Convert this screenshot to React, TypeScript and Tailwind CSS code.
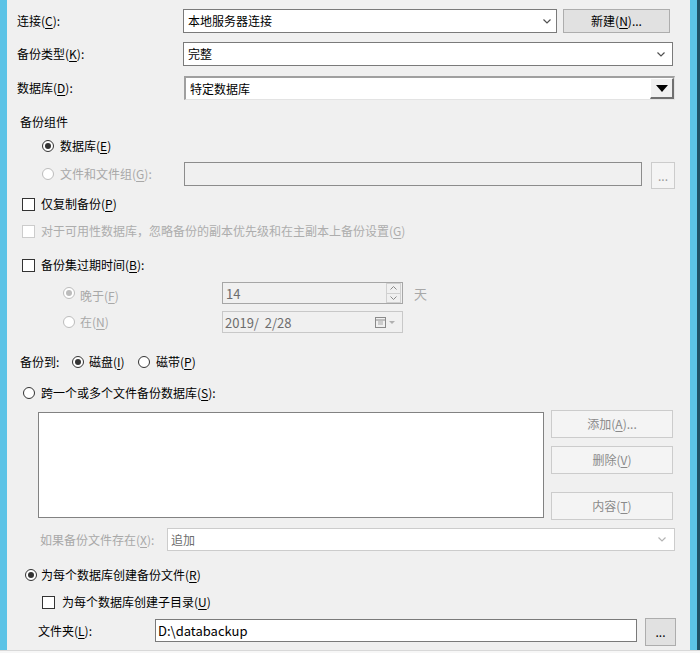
import React from "react";

function Chevron({ light = false }: { light?: boolean }) {
  return (
    <svg width="8" height="5" viewBox="0 0 8 5" className="shrink-0">
      <polyline
        points="0.5,0.5 4,4 7.5,0.5"
        fill="none"
        stroke={light ? "#b4b4b4" : "#505050"}
        strokeWidth="1.2"
      />
    </svg>
  );
}

function Radio({ checked = false, disabled = false }: { checked?: boolean; disabled?: boolean }) {
  return (
    <span
      className={`flex h-[12px] w-[12px] shrink-0 items-center justify-center rounded-full border bg-white ${
        disabled ? "border-[#bcbcbc]" : "border-[#333333]"
      }`}
    >
      {checked && (
        <span className={`h-[6px] w-[6px] rounded-full ${disabled ? "bg-[#bcbcbc]" : "bg-[#333333]"}`} />
      )}
    </span>
  );
}

function Check({ disabled = false }: { disabled?: boolean }) {
  return (
    <span
      className={`h-[13px] w-[13px] shrink-0 border bg-white ${
        disabled ? "border-[#cccccc]" : "border-[#333333]"
      }`}
    />
  );
}

function Key({ k }: { k: string }) {
  return (
    <>
      (<u className="underline-offset-2">{k}</u>)
    </>
  );
}

function DisabledBtn({ children, className = "" }: { children: React.ReactNode; className?: string }) {
  return (
    <div
      className={`flex h-[28px] items-center justify-center border border-[#cccccc] bg-[#f4f4f4] text-[#8a8a8a] ${className}`}
    >
      {children}
    </div>
  );
}

export default function App() {
  return (
    <div className="flex h-[653px] w-[700px] flex-col overflow-hidden bg-[#f0f0f0] font-['Noto_Sans_CJK_SC',sans-serif] text-[12px] leading-none text-black">
      <div className="flex h-[650px]">
        <div className="w-[7px] bg-[#5cc3e6]" />

        <div className="flex flex-1 flex-col pl-[10px]">
          {/* connection */}
          <div className="mt-[9px] flex h-[24px] items-center">
            <span className="w-[166px]">
              连接<Key k="C" />:
            </span>
            <div className="flex h-full w-[374px] items-center justify-between border border-[#7a7a7a] bg-white pl-[4px] pr-[5px]">
              <span>本地服务器连接</span>
              <Chevron />
            </div>
            <div className="ml-[6px] flex h-full w-[107px] items-center justify-center border border-[#adadad] bg-[#e1e1e1]">
              新建<Key k="N" />...
            </div>
          </div>

          <div className="mt-[9px] flex h-[24px] items-center">
            <span className="w-[166px]">
              备份类型<Key k="K" />:
            </span>
            <div className="flex h-full w-[490px] items-center justify-between border border-[#7a7a7a] bg-white pl-[4px] pr-[7px]">
              <span>完整</span>
              <Chevron />
            </div>
          </div>

          <div className="mt-[10px] flex h-[24px] items-center">
            <span className="w-[167px]">
              数据库<Key k="D" />:
            </span>
            <div className="flex h-full w-[491px] items-center border-b border-l-2 border-r border-t-2 border-b-[#e3e3e3] border-l-[#a0a0a0] border-r-[#e3e3e3] border-t-[#a0a0a0] bg-white">
              <span className="flex-1 pl-[4px]">特定数据库</span>
              <div className="flex h-full w-[24px] items-center justify-center border-b-2 border-l border-r-2 border-t border-b-[#707070] border-l-white border-r-[#707070] border-t-white bg-[#f0f0f0]">
                <svg width="12" height="7" viewBox="0 0 12 7">
                  <polygon points="0,0 12,0 6,7" fill="#000" />
                </svg>
              </div>
            </div>
          </div>

          {/* backup component */}
          <div className="mt-[13px] flex h-[18px] items-center pl-[3px]">备份组件</div>
          <div className="mt-[6px] flex h-[18px] items-center gap-[6px] pl-[25px]">
            <Radio checked />
            <span>
              数据库<Key k="E" />
            </span>
          </div>
          <div className="mt-[7px] flex h-[27px] items-start">
            <div className="flex h-[24px] w-[167px] items-center gap-[6px] pl-[25px] text-[#a8a8a8]">
              <Radio disabled />
              <span>
                文件和文件组<Key k="G" />:
              </span>
            </div>
            <div className="h-[24px] w-[458px] border border-[#8c8c8c] bg-[#f0f0f0]" />
            <div className="ml-[9px] flex h-[27px] w-[24px] items-center justify-center border border-[#cccccc] bg-[#f4f4f4] text-[#9a9a9a]">
              ...
            </div>
          </div>

          <div className="mt-[6px] flex h-[18px] items-center gap-[6px] pl-[5px]">
            <Check />
            <span>
              仅复制备份<Key k="P" />
            </span>
          </div>
          <div className="mt-[9px] flex h-[18px] items-center gap-[6px] pl-[5px] text-[#adadad]">
            <Check disabled />
            <span>
              对于可用性数据库，忽略备份的副本优先级和在主副本上备份设置<Key k="G" />
            </span>
          </div>
          <div className="mt-[16px] flex h-[18px] items-center gap-[6px] pl-[5px]">
            <Check />
            <span>
              备份集过期时间<Key k="B" />:
            </span>
          </div>

          {/* expiry */}
          <div className="mt-[8px] flex h-[22px] items-center">
            <div className="flex w-[205px] items-center gap-[5px] pl-[46px] text-[#a8a8a8]">
              <Radio checked disabled />
              <span className="mt-[5px]">
                晚于<Key k="F" />
              </span>
            </div>
            <div className="flex h-full w-[181px] items-center border border-[#a6a6a6] bg-[#f0f0f0] pl-[3px] text-[#6d6d6d]">
              <span className="flex-1 text-[13px]">14</span>
              <div className="mr-[1px] flex h-[20px] w-[15px] flex-col border border-[#d0d0d0]">
                <div className="flex flex-1 items-center justify-center border-b border-[#d0d0d0]">
                  <svg width="7" height="4" viewBox="0 0 7 4">
                    <polyline points="0.5,3.5 3.5,0.5 6.5,3.5" fill="none" stroke="#8a8a8a" />
                  </svg>
                </div>
                <div className="flex flex-1 items-center justify-center">
                  <svg width="7" height="4" viewBox="0 0 7 4">
                    <polyline points="0.5,0.5 3.5,3.5 6.5,0.5" fill="none" stroke="#8a8a8a" />
                  </svg>
                </div>
              </div>
            </div>
            <span className="ml-[11px] text-[13px] text-[#a8a8a8]">天</span>
          </div>
          <div className="mt-[7px] flex h-[22px] items-center">
            <div className="flex w-[205px] items-center gap-[5px] pl-[46px] text-[#a8a8a8]">
              <Radio disabled />
              <span>
                在<Key k="N" />
              </span>
            </div>
            <div className="flex h-full w-[181px] items-center border border-[#c8c8c8] bg-[#f0f0f0] pl-[2px] text-[#6d6d6d]">
              <span className="flex-1 text-[13px]">2019/&nbsp; 2/28</span>
              <svg width="22" height="11" viewBox="0 0 22 11" className="mr-[5px]">
                <rect x="0.5" y="0.5" width="10" height="10" fill="none" stroke="#8a8a8a" />
                <line x1="0.5" y1="3" x2="10.5" y2="3" stroke="#8a8a8a" />
                <line x1="3" y1="5" x2="8" y2="5" stroke="#a8a8a8" />
                <line x1="3" y1="7" x2="8" y2="7" stroke="#a8a8a8" />
                <polygon points="14,4 20,4 17,7" fill="#b0b0b0" />
              </svg>
            </div>
          </div>

          {/* destination */}
          <div className="mt-[20px] flex h-[18px] items-center pl-[3px]">
            <span className="w-[52px]">备份到:</span>
            <div className="flex w-[66px] items-center gap-[5px]">
              <Radio checked />
              <span>
                磁盘<Key k="I" />
              </span>
            </div>
            <div className="flex items-center gap-[6px]">
              <Radio />
              <span>
                磁带<Key k="P" />
              </span>
            </div>
          </div>
          <div className="mt-[13px] flex h-[18px] items-center gap-[6px] pl-[6px]">
            <Radio />
            <span>
              跨一个或多个文件备份数据库<Key k="S" />:
            </span>
          </div>

          <div className="mt-[8px] flex h-[110px] items-start">
            <div className="ml-[21px] mt-[2px] h-[106px] w-[506px] border border-[#828282] bg-white" />
            <div className="ml-[7px] flex w-[122px] flex-col">
              <DisabledBtn>
                添加<Key k="A" />...
              </DisabledBtn>
              <DisabledBtn className="mt-[8px]">
                删除<Key k="V" />
              </DisabledBtn>
              <DisabledBtn className="mt-[18px]">
                内容<Key k="T" />
              </DisabledBtn>
            </div>
          </div>

          <div className="mt-[8px] flex h-[23px] items-center">
            <span className="w-[150px] pl-[23px] text-[#a8a8a8]">
              如果备份文件存在<Key k="X" />:
            </span>
            <div className="flex h-full w-[508px] items-center justify-between border border-[#cccccc] bg-white pl-[3px] pr-[8px] text-[#6d6d6d]">
              <span>追加</span>
              <Chevron light />
            </div>
          </div>

          <div className="mt-[15px] flex h-[18px] items-center gap-[4px] pl-[8px]">
            <Radio checked />
            <span>
              为每个数据库创建备份文件<Key k="R" />
            </span>
          </div>
          <div className="mt-[9px] flex h-[18px] items-center gap-[7px] pl-[25px]">
            <Check />
            <span>
              为每个数据库创建子目录<Key k="U" />
            </span>
          </div>

          <div className="mt-[7px] flex h-[28px] items-start">
            <span className="flex h-[25px] w-[138px] items-center pl-[21px]">
              文件夹<Key k="L" />:
            </span>
            <div className="mt-[1px] flex h-[23px] w-[482px] items-center border border-[#7a7a7a] bg-white pl-[2px] text-[13px]">
              D:\databackup
            </div>
            <div className="ml-[8px] flex h-[28px] w-[31px] items-center justify-center border border-[#adadad] bg-[#e1e1e1]">
              ...
            </div>
          </div>
        </div>

        <div className="w-[7px] bg-[#5cc3e6]" />
        <div className="w-[3px] bg-[#1f5166]" />
      </div>
      <div className="h-[3px] border-t border-[#d8d8d8] bg-[#f7f7f7]" />
    </div>
  );
}
